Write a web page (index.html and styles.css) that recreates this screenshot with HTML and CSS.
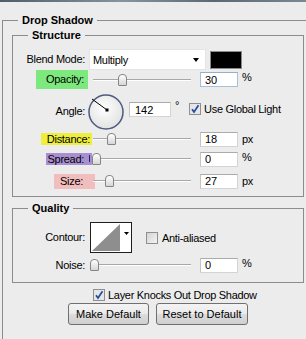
FILE: index.html
```html
<!DOCTYPE html>
<html lang="en">

<head>
    <meta charset="UTF-8">
    <title>Drop Shadow</title>
    <link rel="stylesheet" href="styles.css">
</head>

<body>
    <div class="titlebar"></div>
    <fieldset class="panel">
        <legend>Drop Shadow</legend>

        <fieldset class="group structure">
            <legend>Structure</legend>

            <div class="row row-blend">
                <label class="name">Blend Mode:</label>
                <div class="select"><span>Multiply</span><span class="arrow"></span></div>
                <span class="swatch"></span>
            </div>

            <div class="row row-opacity">
                <label class="name"><span class="hl hl-opacity">Opacity:</span></label>
                <div class="slider"><span class="thumb" style="left:25px"></span></div>
                <input class="field focus" type="text" value="30">
                <span class="unit unit-pct">%</span>
            </div>

            <div class="row row-angle">
                <label class="name">Angle:</label>
                <svg class="dial" width="36" height="36" viewBox="0 0 36 36">
                    <defs>
                        <radialGradient id="dialfill" cx="45%" cy="40%" r="60%">
                            <stop offset="0" stop-color="#ffffff"/>
                            <stop offset="1" stop-color="#e2e2e2"/>
                        </radialGradient>
                    </defs>
                    <circle cx="18" cy="18" r="17" fill="url(#dialfill)" stroke="#4d5b7e" stroke-width="1.5"/>
                    <line x1="19" y1="16" x2="4" y2="5" stroke="#000" stroke-width="1"/>
                    <rect x="17.5" y="14.5" width="3" height="3" fill="#000"/>
                </svg>
                <input class="field field-angle" type="text" value="142">
                <span class="degree">°</span>
                <span class="check check-global">
                    <svg class="box" width="12" height="12" viewBox="0 0 12 12">
                        <rect x="0.5" y="0.5" width="11" height="11" fill="#e4e6ea" stroke="#8e8f8f"/>
                        <path d="M3 6.2 L5 9 L9.5 2.2" fill="none" stroke="#2b4b98" stroke-width="1.7"/>
                    </svg>
                    Use Global Light
                </span>
            </div>

            <div class="row row-distance">
                <label class="name"><span class="hl hl-distance">Distance:</span></label>
                <div class="slider"><span class="thumb" style="left:14px"></span></div>
                <input class="field" type="text" value="18">
                <span class="unit">px</span>
            </div>

            <div class="row row-spread">
                <label class="name"><span class="hl hl-spread">Spread:</span></label>
                <div class="slider"><span class="mark"></span><span class="thumb" style="left:-1px"></span></div>
                <input class="field" type="text" value="0">
                <span class="unit unit-pct">%</span>
            </div>

            <div class="row row-size">
                <label class="name"><span class="hl hl-size">Size:</span></label>
                <div class="slider"><span class="thumb" style="left:12px"></span></div>
                <input class="field" type="text" value="27">
                <span class="unit">px</span>
            </div>
        </fieldset>

        <fieldset class="group quality">
            <legend>Quality</legend>

            <div class="row row-contour">
                <label class="name">Contour:</label>
                <svg class="contour" width="42" height="31" viewBox="0 0 42 31">
                    <rect x="0.5" y="0.5" width="41" height="30" fill="#fff" stroke="#1e1e1e"/>
                    <polygon points="2,29 30,2 30,29" fill="#8e8e8e"/>
                    <polygon points="34,10 39,10 36.5,13" fill="#000"/>
                </svg>
                <span class="check check-aa">
                    <svg class="box" width="12" height="12" viewBox="0 0 12 12">
                        <defs>
                            <linearGradient id="boxfill" x1="0" y1="0" x2="1" y2="1">
                                <stop offset="0" stop-color="#d2d2d2"/>
                                <stop offset="1" stop-color="#f6f6f6"/>
                            </linearGradient>
                        </defs>
                        <rect x="0.5" y="0.5" width="11" height="11" fill="url(#boxfill)" stroke="#8e8f8f"/>
                    </svg>
                    Anti-aliased
                </span>
            </div>

            <div class="row row-noise">
                <label class="name">Noise:</label>
                <div class="slider"><span class="thumb" style="left:-3px"></span></div>
                <input class="field" type="text" value="0">
                <span class="unit unit-pct">%</span>
            </div>
        </fieldset>

        <div class="row row-knockout">
            <span class="check">
                <svg class="box" width="12" height="12" viewBox="0 0 12 12">
                    <rect x="0.5" y="0.5" width="11" height="11" fill="#e4e6ea" stroke="#8e8f8f"/>
                    <path d="M3 6.2 L5 9 L9.5 2.2" fill="none" stroke="#2b4b98" stroke-width="1.7"/>
                </svg>
                Layer Knocks Out Drop Shadow
            </span>
        </div>

        <div class="row row-buttons">
            <button type="button" class="btn btn-make">Make Default</button>
            <button type="button" class="btn btn-reset">Reset to Default</button>
        </div>
    </fieldset>
</body>

</html>
```

FILE: styles.css
```css
html,
body {
    margin: 0;
    padding: 0;
    height: 100%;
    overflow: hidden;
}

body {
    background-color: #ececec;
    font-family: "Liberation Sans", Arial, sans-serif;
    font-size: 11px;
    letter-spacing: -0.3px;
    color: #000;
}

.titlebar {
    height: 2px;
    background: linear-gradient(to right, #4f5d6b, #8694a1 40%, #5b6874 70%, #7a8894);
}

fieldset {
    min-inline-size: 0;
    border: 1px solid #8c8c8c;
}

legend {
    font-weight: bold;
    letter-spacing: 0;
    line-height: 13px;
    padding: 0 4px;
}

/* outer box: its right and bottom edges sit off the window */
.panel {
    box-sizing: border-box;
    height: 325px;
    margin: 12px 0 0 2px;
    padding: 0;
    border-right: none;
    border-bottom: none;
}

.panel > legend {
    margin-left: 15px;
}

.group {
    box-sizing: border-box;
    width: 292px;
    margin: 2px 0 0 9px;
    padding: 0 0 5px 0;
}

.group > legend {
    margin-left: 15px;
}

.quality {
    margin-top: 5px;
    padding-bottom: 9px;
}

.row {
    display: flex;
    align-items: center;
}

.name {
    flex: none;
    width: 72px;
    text-align: right;
    line-height: 13px;
}

/* label highlights */
.hl {
    display: inline-block;
}

.hl-opacity {
    background-color: #7de87d;
    padding: 3px 4px 3px 10px;
    margin-right: -3px;
}

.hl-distance {
    background-color: #eeee3e;
    line-height: 12px;
    padding: 0 2px 0 6px;
    margin-right: -7px;
}

.hl-spread {
    background-color: #a88fd0;
    line-height: 12px;
    padding: 0 8px 0 2px;
    margin-right: -7px;
}

.hl-size {
    background-color: #f2bdbd;
    padding: 1px 12px 1px 6px;
    margin-right: -10px;
}

/* blend mode */
.row-blend {
    margin-top: 7px;
    height: 21px;
}

.select {
    box-sizing: border-box;
    display: flex;
    align-items: center;
    margin-left: 4px;
    width: 117px;
    height: 21px;
    padding-left: 3px;
    background-color: #fff;
    border: 1px solid #e4e4e4;
}

.arrow {
    margin-left: auto;
    margin-right: 6px;
    border-top: 4px solid #000;
    border-left: 3.5px solid transparent;
    border-right: 3.5px solid transparent;
}

.swatch {
    box-sizing: border-box;
    margin-left: 4px;
    width: 32px;
    height: 18px;
    background-color: #000;
    border: 1px solid #8a8a8a;
}

/* sliders */
.slider {
    position: relative;
    flex: none;
    margin-left: 8px;
    width: 98px;
    height: 12px;
}

.slider::before {
    content: "";
    position: absolute;
    left: 0;
    right: 0;
    top: 5px;
    border-top: 1px solid #a8a8a8;
    border-bottom: 1px solid #fff;
}

.thumb {
    position: absolute;
    top: 0;
    box-sizing: border-box;
    width: 9px;
    height: 12px;
    border: 1px solid #858585;
    border-radius: 4px 4px 1px 1px;
    background: linear-gradient(#ffffff, #d6d6d6);
}

.mark {
    position: absolute;
    left: -4px;
    top: 2px;
    width: 1px;
    height: 7px;
    background-color: #1c2a6a;
}

.field {
    box-sizing: border-box;
    flex: none;
    margin: 0 0 0 9px;
    width: 38px;
    height: 15px;
    padding: 0 0 0 4px;
    font: inherit;
    color: #000;
    background-color: #fff;
    border: 1px solid #d4d4d4;
    border-top-color: #ababab;
    border-left-color: #c4c4c4;
    outline: none;
}

.field.focus {
    border-color: #a4c0da;
    border-top-color: #8fb0cf;
}

.unit {
    margin-left: 4px;
    line-height: 13px;
}

.unit-pct {
    position: relative;
    top: -2px;
}

/* angle */
.row-angle {
    margin-top: 5px;
    height: 35px;
}

.dial {
    flex: none;
    margin-left: 3px;
}

.field-angle {
    align-self: flex-start;
    margin: 8px 0 0 5px;
    width: 42px;
    padding-left: 5px;
}

.degree {
    align-self: flex-start;
    margin: 5px 0 0 4px;
}

.check {
    display: inline-flex;
    align-items: center;
    gap: 3px;
}

.check-global {
    align-self: flex-start;
    margin: 9px 0 0 10px;
}

.box {
    flex: none;
}

.row-distance,
.row-spread {
    height: 20px;
}

.row-size {
    margin-top: 2px;
    height: 20px;
}

/* quality */
.row-contour {
    margin-top: 7px;
    height: 31px;
}

.contour {
    flex: none;
    margin-left: 5px;
}

.check-aa {
    margin-left: 14px;
    gap: 4px;
}

.row-noise {
    margin-top: 4px;
    height: 16px;
}

/* bottom */
.row-knockout {
    margin: 5px 0 0 90px;
    height: 13px;
}

.row-buttons {
    margin: 2px 0 0 65px;
    gap: 7px;
}

.btn {
    height: 22px;
    padding: 0;
    font: inherit;
    color: #000;
    border: 1px solid #707070;
    border-radius: 3px;
    background: linear-gradient(#f3f3f3, #ebebeb 50%, #dddddd 51%, #cfcfcf);
}

.btn-make {
    width: 81px;
}

.btn-reset {
    width: 92px;
}
```
